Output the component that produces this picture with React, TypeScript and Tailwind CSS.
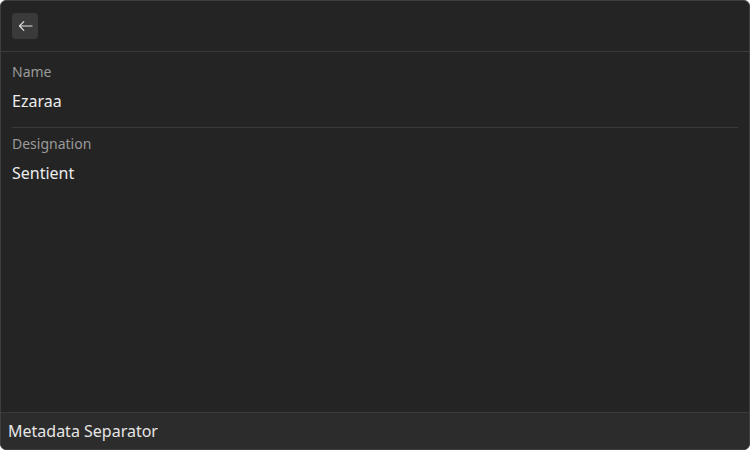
import React from 'react';

const fields = [
  { label: 'Name', value: 'Ezaraa' },
  { label: 'Designation', value: 'Sentient' },
];

export default function App() {
  return (
    <div className="w-[750px] h-[450px] bg-white" style={{ fontFamily: '"Noto Sans", "Open Sans", sans-serif' }}>
      <div className="flex h-full flex-col overflow-hidden rounded-[6px] border border-[#3e3e3e] bg-[#242424]">
        {/* header */}
        <div className="flex h-[51px] shrink-0 items-center border-b border-[#3a3a3a] px-[11px]">
          <button className="mt-[-1px] flex h-[26px] w-[26px] items-center justify-center rounded-[4px] bg-[#3a3a3a] text-[#e0e0e0]">
            <svg width="15" height="14" viewBox="0 0 15 14" fill="none" stroke="currentColor" strokeWidth="1.2" strokeLinecap="round" strokeLinejoin="round">
              <path d="M14 7H1.5" />
              <path d="M5.8 2.6L1.5 7L5.8 11.4" />
            </svg>
          </button>
        </div>

        {/* fields */}
        <div className="flex-1 px-[11px]">
          {fields.map((f, i) => (
            <div key={f.label} className={i === 0 ? 'pt-[10px] pb-[14px] border-b border-[#3a3a3a]' : 'pt-[6px]'}>
              <div className="h-5 text-[14px] leading-5 text-[#9a9a9a]">{f.label}</div>
              <div className="mt-[7px] h-6 text-[16px] leading-6 text-[#ececec]">{f.value}</div>
            </div>
          ))}
        </div>

        {/* footer */}
        <div className="flex h-[37px] shrink-0 items-center border-t border-[#3a3a3a] bg-[#2c2c2c] px-[7px] text-[16px] text-[#e6e6e6]">
          Metadata Separator
        </div>
      </div>
    </div>
  );
}
